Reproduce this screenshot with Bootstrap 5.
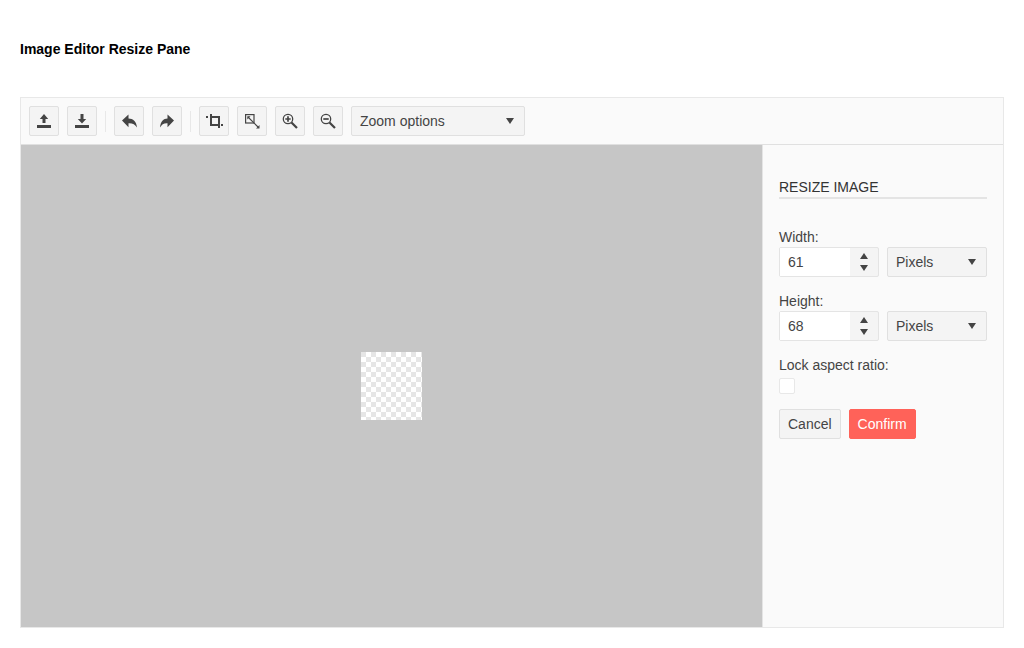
<!DOCTYPE html>
<html lang="en">
  <head>
    <meta charset="UTF-8" />
    <meta name="viewport" content="width=device-width, initial-scale=1.0" />
    <title>Image Editor Resize Pane</title>
    <link
      href="https://cdn.jsdelivr.net/npm/bootstrap@5.3.0/dist/css/bootstrap.min.css"
      rel="stylesheet"
    />
    <style>
      body {
        font-family: "Liberation Sans", Arial, sans-serif;
        font-size: 14px;
        color: #333;
        background: #fff;
      }
      .page-wrap {
        padding: 0 20px;
      }
      .page-title {
        font-size: 14px;
        font-weight: 700;
        line-height: 20px;
        color: #000;
        padding-top: 39px;
        margin: 0 0 38px;
      }
      .editor-box {
        height: 531px;
        border: 1px solid #e8e8e8;
        background: #fafafa;
      }
      .editor-toolbar {
        height: 47px;
        padding: 8px;
        gap: 8px;
        border-bottom: 1px solid #e0e0e0;
      }
      .tool-btn {
        width: 30px;
        height: 30px;
        padding: 0;
        border: 1px solid #e0e0e0;
        border-radius: 2px;
        background: #f4f4f4;
      }
      .tool-sep {
        width: 1px;
        height: 21px;
        background: #e8e8e8;
      }
      .tool-select {
        width: 174px;
        height: 30px;
        padding: 0 10px 0 8px;
        border: 1px solid #e0e0e0;
        border-radius: 2px;
        background: #f4f4f4;
        font-size: 14px;
        color: #444;
      }
      .caret-down {
        width: 0;
        height: 0;
        border-left: 4.5px solid transparent;
        border-right: 4.5px solid transparent;
        border-top: 6px solid #444;
      }
      .caret-up {
        width: 0;
        height: 0;
        border-left: 4.5px solid transparent;
        border-right: 4.5px solid transparent;
        border-bottom: 6px solid #444;
      }
      .editor-body {
        height: 482px;
      }
      .canvas-area {
        width: 742px;
        flex: 0 0 742px;
        background: #c6c6c6;
        border-right: 1px solid #e4e4e4;
      }
      .image-check {
        width: 61px;
        height: 68px;
        background-color: #fff;
        background-image: conic-gradient(#e6e6e6 25%, transparent 0 50%, #e6e6e6 0 75%, transparent 0);
        background-size: 10px 10px;
        background-position: 5px 0;
      }
      .side-pane {
        width: 240px;
        flex: 0 0 240px;
        padding: 32px 16px 0;
        color: #444;
      }
      .pane-title {
        font-size: 14px;
        font-weight: 400;
        line-height: 20px;
        color: #333;
        margin: 0 0 28px;
        border-bottom: 2px solid #e4e4e4;
        height: 22px;
      }
      .field-label {
        display: block;
        line-height: 20px;
        margin: 0;
      }
      .field-row {
        gap: 8px;
        margin-bottom: 14px;
      }
      .num-field {
        width: 100px;
        height: 30px;
        border: 1px solid #e4e4e4;
        border-radius: 2px;
        background: #f4f4f4;
      }
      .num-value {
        width: 70px;
        height: 28px;
        line-height: 28px;
        padding-left: 8px;
        background: #fff;
      }
      .spin-col {
        width: 28px;
        gap: 6px;
      }
      .unit-select {
        width: 100px;
        height: 30px;
        padding: 0 10px 0 8px;
        border: 1px solid #e0e0e0;
        border-radius: 2px;
        background: #f4f4f4;
        color: #444;
        font-size: 14px;
      }
      .lock-box {
        width: 16px;
        height: 16px;
        border: 1px solid #e8e8e8;
        border-radius: 2px;
        background: #fff;
        margin: 3px 0 15px;
      }
      .pane-btn {
        height: 30px;
        padding: 0 8px;
        font-size: 14px;
        line-height: 28px;
        border-radius: 2px;
      }
      .cancel-btn {
        border: 1px solid #e0e0e0;
        background: #f4f4f4;
        color: #444;
      }
      .confirm-btn {
        border: 1px solid #ff6259;
        background: #ff6259;
        color: #fff;
      }
    </style>
  </head>
  <body>
    <div class="page-wrap">
      <h1 class="page-title">Image Editor Resize Pane</h1>

      <div class="editor-box">
        <div class="editor-toolbar d-flex align-items-center">
          <button class="tool-btn d-flex align-items-center justify-content-center" aria-label="Open">
            <svg width="16" height="16" viewBox="0 0 16 16" fill="#444"><path d="M1 12h14v3H1zM8 1l4.200 5H9.500v4h-3V6H3.800z"/></svg>
          </button>
          <button class="tool-btn d-flex align-items-center justify-content-center" aria-label="Save">
            <svg width="16" height="16" viewBox="0 0 16 16" fill="#444"><path d="M1 12h14v3H1zM8 10.500L12.200 6H9.500V1h-3v5H3.800z"/></svg>
          </button>
          <span class="tool-sep"></span>
          <button class="tool-btn d-flex align-items-center justify-content-center" aria-label="Undo">
            <svg width="16" height="16" viewBox="0 0 16 16" fill="#444"><path d="M1 7.500L7.500 1.500v4c4.500 0 8 3 8.500 9-1.800-3-4.500-4.500-8.500-4.300v4z"/></svg>
          </button>
          <button class="tool-btn d-flex align-items-center justify-content-center" aria-label="Redo">
            <svg width="16" height="16" viewBox="0 0 16 16" fill="#444"><path d="M15 7.500L8.500 1.500v4c-4 0-7 3-7.500 9 1.800-3 3.500-4.500 7.500-4.300v4z"/></svg>
          </button>
          <span class="tool-sep"></span>
          <button class="tool-btn d-flex align-items-center justify-content-center" aria-label="Crop">
            <svg width="18" height="18" viewBox="0 0 18 18" fill="#444"><path d="M1 4h2v2H1zM5 2h2v2h8v12h-2v-2H5zM7 6v6h6V6zM16 12h2v2h-2z" fill-rule="evenodd"/></svg>
          </button>
          <button class="tool-btn d-flex align-items-center justify-content-center" aria-label="Resize">
            <svg width="16" height="16" viewBox="0 0 16 16" fill="none" stroke="#444"><rect x="1.600" y="1.600" width="8.400" height="8.400" stroke-width="1.200"/><path d="M4 4l10 10" stroke-width="1.100"/><path d="M3.300 3.300h3.200L3.300 6.500zM15.500 15.500h-3.500l3.500-3.500z" fill="#444" stroke="none"/></svg>
          </button>
          <button class="tool-btn d-flex align-items-center justify-content-center" aria-label="Zoom in">
            <svg width="16" height="16" viewBox="0 0 16 16" fill="none" stroke="#444"><circle cx="6" cy="6" r="4.700" stroke-width="1.300"/><path d="M3.300 6h5.400M6 3.300v5.400" stroke-width="1.700"/><path d="M9.500 9.500l5.500 5.500" stroke-width="2.200"/></svg>
          </button>
          <button class="tool-btn d-flex align-items-center justify-content-center" aria-label="Zoom out">
            <svg width="16" height="16" viewBox="0 0 16 16" fill="none" stroke="#444"><circle cx="6" cy="6" r="4.700" stroke-width="1.300"/><path d="M3.300 6h5.400" stroke-width="1.700"/><path d="M9.500 9.500l5.500 5.500" stroke-width="2.200"/></svg>
          </button>
          <div class="tool-select d-flex align-items-center justify-content-between">
            <span>Zoom options</span>
            <span class="caret-down"></span>
          </div>
        </div>

        <div class="editor-body d-flex">
          <div class="canvas-area d-flex align-items-center justify-content-center">
            <div class="image-check"></div>
          </div>

          <div class="side-pane">
            <h2 class="pane-title">RESIZE IMAGE</h2>

            <label class="field-label">Width:</label>
            <div class="field-row d-flex">
              <div class="num-field d-flex">
                <div class="num-value">61</div>
                <div class="spin-col d-flex flex-column align-items-center justify-content-center">
                  <span class="caret-up"></span>
                  <span class="caret-down"></span>
                </div>
              </div>
              <div class="unit-select d-flex align-items-center justify-content-between">
                <span>Pixels</span>
                <span class="caret-down"></span>
              </div>
            </div>

            <label class="field-label">Height:</label>
            <div class="field-row d-flex">
              <div class="num-field d-flex">
                <div class="num-value">68</div>
                <div class="spin-col d-flex flex-column align-items-center justify-content-center">
                  <span class="caret-up"></span>
                  <span class="caret-down"></span>
                </div>
              </div>
              <div class="unit-select d-flex align-items-center justify-content-between">
                <span>Pixels</span>
                <span class="caret-down"></span>
              </div>
            </div>

            <label class="field-label">Lock aspect ratio:</label>
            <div class="lock-box"></div>

            <div class="d-flex gap-2">
              <button class="pane-btn cancel-btn">Cancel</button>
              <button class="pane-btn confirm-btn">Confirm</button>
            </div>
          </div>
        </div>
      </div>
    </div>

    <script src="https://cdn.jsdelivr.net/npm/bootstrap@5.3.0/dist/js/bootstrap.bundle.min.js"></script>
  </body>
</html>
